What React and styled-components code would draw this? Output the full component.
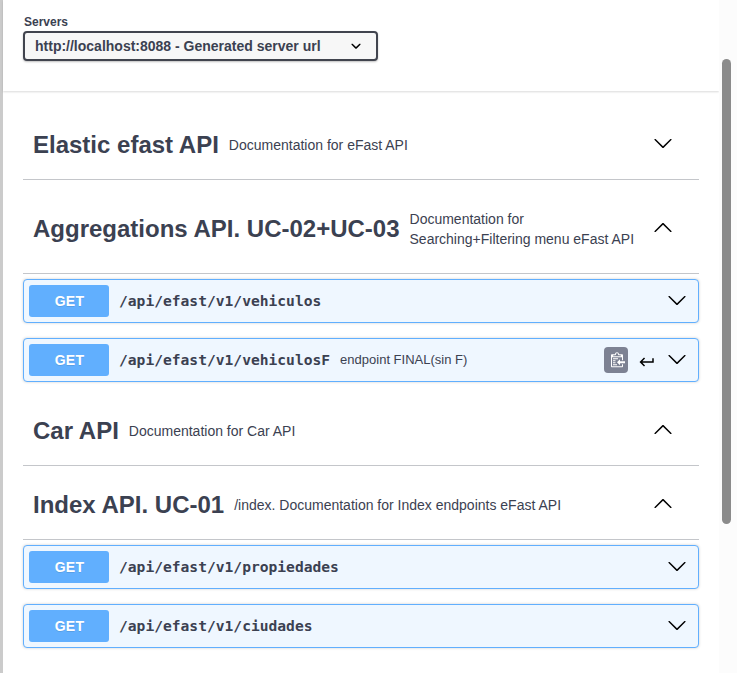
import React from "react";
import styled, { createGlobalStyle } from "styled-components";

const GlobalStyle = createGlobalStyle`
  * { box-sizing: border-box; }
  body { margin: 0; background: #fff; overflow: hidden; }
`;

const Page = styled.div`
  display: grid;
  grid-template-columns: 3px 716px 18px;
  width: 737px;
  height: 673px;
  overflow: hidden;
  color: #3b4151;
  font-family: "Liberation Sans", Arial, sans-serif;
`;

const Edge = styled.div`
  background: #cbcbcb;
`;

const Main = styled.main`
  display: flex;
  flex-direction: column;
  min-width: 0;
`;

const ServerBar = styled.section`
  flex: none;
  height: 91px;
  padding: 15px 20px 0;
  box-shadow: 0 1px 2px rgba(0, 0, 0, 0.15);
`;

const ServerLabel = styled.div`
  height: 16px;
  padding-left: 1px;
  font-size: 12px;
  font-weight: 700;
  line-height: 14px;
`;

const ServerSelect = styled.div`
  display: flex;
  align-items: center;
  justify-content: space-between;
  width: 355px;
  height: 30px;
  padding: 0 10px;
  border: 2px solid #41444e;
  border-radius: 4px;
  background: #f7f7f7;
  box-shadow: 0 1px 2px rgba(0, 0, 0, 0.25);
  font-size: 14px;
  font-weight: 700;
`;

const Sections = styled.div`
  display: flex;
  flex-direction: column;
  padding: 19px 20px 0;
`;

const TagHeader = styled.header`
  display: flex;
  align-items: center;
  height: ${(p) => p.$height}px;
  margin-bottom: 5px;
  padding: 0 26px 0 10px;
  border-bottom: 1px solid rgba(59, 65, 81, 0.3);
`;

const TagTitle = styled.h3`
  flex: none;
  margin: 0;
  font-size: 24px;
  font-weight: 700;
  line-height: 28px;
`;

const TagText = styled.p`
  flex: 1;
  margin: 0;
  padding: 0 10px;
  font-size: 14px;
  line-height: 20px;
`;

const Operation = styled.div`
  display: flex;
  align-items: center;
  height: 44px;
  margin-bottom: 15px;
  padding: 0 11px 0 5px;
  border: 1px solid #61affe;
  border-radius: 4px;
  background: #eff7ff;
  box-shadow: 0 0 3px rgba(0, 0, 0, 0.19);
`;

const Method = styled.span`
  width: 80px;
  height: 32px;
  padding-left: 1px;
  border-radius: 3px;
  background: #61affe;
  color: #fff;
  font-size: 14px;
  font-weight: 700;
  letter-spacing: 0.3px;
  line-height: 32px;
  text-align: center;
  text-shadow: 0 1px 0 rgba(0, 0, 0, 0.1);
`;

const Path = styled.span`
  padding: 0 10px;
  font-family: "DejaVu Sans Mono", monospace;
  font-size: 14.62px;
  font-weight: 700;
  line-height: 20px;
`;

const Summary = styled.span`
  flex: 1;
  padding-bottom: 1px;
  font-size: 13px;
  line-height: 17px;
`;

const Actions = styled.div`
  display: flex;
  align-items: center;
`;

const CopyButton = styled.span`
  display: flex;
  align-items: center;
  justify-content: center;
  width: 24px;
  height: 26px;
  margin-right: 10px;
  border-radius: 4px;
  background: #7d8293;
`;

const Icon = styled.svg`
  display: block;
  flex: none;
  margin-right: ${(p) => p.$gap || 0}px;
  margin-top: ${(p) => p.$drop || 0}px;
  margin-bottom: ${(p) => p.$lift || 0}px;
`;

const ScrollTrack = styled.div`
  padding: 59px 6px 0 3px;
  background: #fcfcfc;
`;

const ScrollThumb = styled.div`
  height: 465px;
  border-radius: 5px;
  background: #8b8b8b;
`;

const Chevron = ({ up, lift = 2 }) => (
  <Icon width="20" height="20" viewBox="0 0 20 20" $lift={lift}>
    <path
      transform={up ? "rotate(180 10 10)" : undefined}
      d="M17.418 6.109c.272-.268.709-.268.979 0s.271.701 0 .969l-7.908 7.83c-.27.268-.707.268-.979 0l-7.908-7.83c-.27-.268-.27-.701 0-.969.271-.268.709-.268.979 0L10 13.25l7.418-7.141z"
    />
  </Icon>
);

const SelectArrow = () => (
  <Icon width="20" height="20" viewBox="0 0 20 20">
    <path d="M13.418 7.859c.271-.268.709-.268.978 0 .27.268.272.701 0 .969l-3.908 3.83c-.27.268-.707.268-.979 0l-3.908-3.83c-.27-.267-.27-.701 0-.969.271-.268.709-.268.978 0L10 11l3.418-3.141z" />
  </Icon>
);

const Clipboard = () => (
  <Icon width="18" height="18" viewBox="0 0 18 18">
    <path
      fill="#fff"
      transform="translate(4 0.2)"
      d="M2 13h4v1H2v-1zm5-6H2v1h5V7zm2 3V8l-3 3 3 3v-2h5v-2H9zM4.5 9H2v1h2.5V9zM2 12h2.5v-1H2v1zm9 1h1v2c-.02.28-.11.52-.3.7-.19.18-.42.28-.7.3H1c-.55 0-1-.45-1-1V4c0-.55.45-1 1-1h3c0-1.11.89-2 2-2 1.11 0 2 .89 2 2h3c.55 0 1 .45 1 1v5h-1V6H1v9h10v-2zM2 5h8c0-.55-.45-1-1-1H8c-.55 0-1-.45-1-1s-.45-1-1-1-1 .45-1 1-.45 1-1 1H3c-.55 0-1 .45-1 1z"
    />
  </Icon>
);

const ReturnArrow = () => (
  <Icon width="18" height="18" viewBox="0 0 24 24" $gap={11} $drop={3}>
    <path d="M19 7v4H5.83l3.58-3.59L8 6l-6 6 6 6 1.41-1.41L5.83 13H21V7z" />
  </Icon>
);

const tags = [
  { title: "Elastic efast API", text: "Documentation for eFast API", height: 70, lift: 4, ops: [] },
  {
    title: "Aggregations API. UC-02+UC-03",
    text: "Documentation for Searching+Filtering menu eFast API",
    height: 89,
    open: true,
    ops: [
      { path: "/api/efast/v1/vehiculos" },
      { path: "/api/efast/v1/vehiculosF", summary: "endpoint FINAL(sin F)", tools: true },
    ],
  },
  { title: "Car API", text: "Documentation for Car API", height: 69, open: true, ops: [] },
  {
    title: "Index API. UC-01",
    text: "/index. Documentation for Index endpoints eFast API",
    height: 69,
    open: true,
    ops: [{ path: "/api/efast/v1/propiedades" }, { path: "/api/efast/v1/ciudades" }],
  },
];

export default function App() {
  return (
    <Page>
      <GlobalStyle />
      <Edge />
      <Main>
        <ServerBar>
          <ServerLabel>Servers</ServerLabel>
          <ServerSelect>
            http://localhost:8088 - Generated server url
            <SelectArrow />
          </ServerSelect>
        </ServerBar>
        <Sections>
          {tags.map((tag) => (
            <React.Fragment key={tag.title}>
              <TagHeader $height={tag.height}>
                <TagTitle>{tag.title}</TagTitle>
                <TagText>{tag.text}</TagText>
                <Chevron up={tag.open} lift={tag.lift} />
              </TagHeader>
              {tag.ops.map((op) => (
                <Operation key={op.path}>
                  <Method>GET</Method>
                  <Path>{op.path}</Path>
                  <Summary>{op.summary}</Summary>
                  <Actions>
                    {op.tools && (
                      <>
                        <CopyButton>
                          <Clipboard />
                        </CopyButton>
                        <ReturnArrow />
                      </>
                    )}
                    <Chevron />
                  </Actions>
                </Operation>
              ))}
            </React.Fragment>
          ))}
        </Sections>
      </Main>
      <ScrollTrack>
        <ScrollThumb />
      </ScrollTrack>
    </Page>
  );
}
